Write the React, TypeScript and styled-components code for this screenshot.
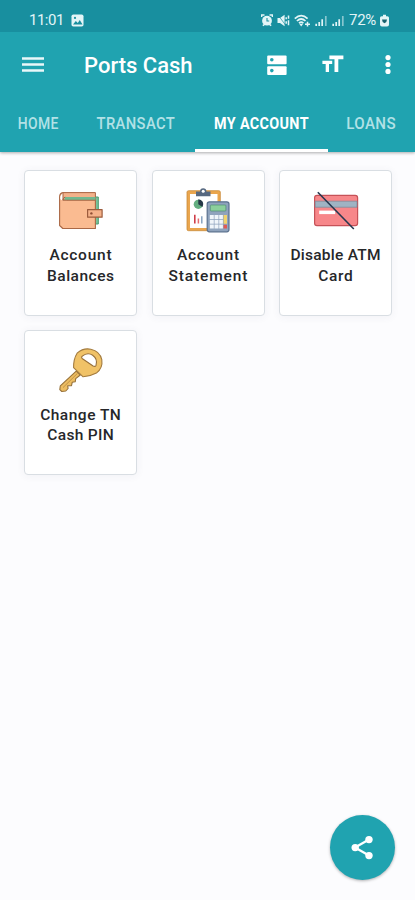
import React from "react";
import styled, { createGlobalStyle } from "styled-components";

const Global = createGlobalStyle`
  * { box-sizing: border-box; }
  body { margin: 0; background: #fcfcfe; font-family: Roboto, "Liberation Sans", sans-serif; }
  svg { display: block; flex: none; }
`;

const Screen = styled.div`
  width: 415px;
  height: 900px;
  display: flex;
  flex-direction: column;
  background: #fcfcfe;
  overflow: hidden;
`;
const Header = styled.header`
  background: #20a3b0;
  height: 152px;
  flex: none;
  box-shadow: 0 1px 3px rgba(0, 0, 0, 0.32);
`;
const StatusBar = styled.div`
  height: 32px;
  padding: 9px 26px 0 29px;
  background: #188f9f;
  display: flex;
  justify-content: space-between;
  color: #e3f5f7;
`;
const StatusGroup = styled.div<{ $gap: number }>`
  display: flex;
  align-items: center;
  height: 23px;
  gap: ${(p) => p.$gap}px;
`;
const StatusText = styled.span<{ $spacing: number }>`
  font-size: 15px;
  line-height: 23px;
  letter-spacing: ${(p) => p.$spacing}px;
`;
const Toolbar = styled.div`
  height: 66px;
  display: flex;
  align-items: center;
  padding: 0 0 0 22px;
  color: #fff;
`;
const Title = styled.h1`
  margin: 2px 0 0 40px;
  flex: 1;
  font-size: 22px;
  font-weight: 500;
  line-height: 30px;
  letter-spacing: 0;
`;
const Actions = styled.div`
  display: flex;
  align-items: center;
`;
const IconButton = styled.button<{ $width: number }>`
  width: ${(p) => p.$width}px;
  height: 30px;
  padding: 0;
  border: 0;
  background: none;
  color: inherit;
  display: flex;
  align-items: center;
  justify-content: center;
`;
const Tabs = styled.nav`
  height: 54px;
  display: grid;
  grid-template-columns: 77px 118px 133px 87px;
`;
const Tab = styled.div<{ $active?: boolean }>`
  display: flex;
  justify-content: center;
  padding-top: 15px;
  color: ${(p) => (p.$active ? "#fff" : "#b2e1e6")};
  border-bottom: 3px solid ${(p) => (p.$active ? "#fff" : "transparent")};
`;
const TabLabel = styled.span<{ $stretch: number; $active?: boolean }>`
  font-size: 16.5px;
  line-height: 22px;
  font-weight: ${(p) => (p.$active ? 700 : 500)};
  white-space: nowrap;
  letter-spacing: 0.4px;
  transform: scaleX(${(p) => p.$stretch});
`;
const Grid = styled.main`
  flex: 1;
  padding: 18px 23px 0 24px;
  display: grid;
  grid-template-columns: repeat(3, 113px);
  grid-auto-rows: 145.5px;
  gap: 14px 14.5px;
  align-content: start;
`;
const Card = styled.section`
  background: #fff;
  border: 1px solid #d9dee3;
  border-radius: 4px;
  box-shadow: 0 1px 8px rgba(60, 70, 110, 0.06);
  display: flex;
  flex-direction: column;
  align-items: center;
  padding-top: 17px;
`;
const CardIcon = styled.div<{ $inset: number }>`
  margin-right: ${(p) => p.$inset}px;
`;
const CardLabel = styled.div`
  margin-top: 13px;
  display: flex;
  flex-direction: column;
  align-items: center;
`;
const LabelLine = styled.span<{ $spacing: number }>`
  font-size: 15.5px;
  font-weight: 500;
  line-height: 20.5px;
  color: #26272a;
  white-space: nowrap;
  letter-spacing: ${(p) => p.$spacing}px;
  margin-right: -${(p) => p.$spacing}px;
`;
const Footer = styled.footer`
  display: flex;
  justify-content: flex-end;
  padding: 0 20.5px 20px 0;
`;
const ShareButton = styled.button`
  width: 65px;
  height: 65px;
  border: 0;
  padding: 0;
  border-radius: 50%;
  background: #20a3b0;
  color: #fff;
  display: flex;
  align-items: center;
  justify-content: center;
  box-shadow: 0 1px 3px rgba(0, 0, 0, 0.3);
`;

const PictureIcon = () => (
  <svg width="13" height="13" viewBox="0 0 13 13">
    <rect x=".5" y=".5" width="12" height="12" rx="1.8" fill="currentColor" />
    <path d="M2 10.5 4.8 7l2 2 2-3 2.7 4.5z" fill="#188f9f" />
    <circle cx="4" cy="3.9" r="1.1" fill="#188f9f" />
  </svg>
);
const AlarmIcon = () => (
  <svg width="12" height="13" viewBox="0 0 12 13">
    <circle cx="6" cy="6.7" r="4.9" fill="currentColor" />
    <path d="M.5 3V1h3M11.5 3V1h-3M2 11.8l1-1.2M10 11.8 9 10.6" fill="none" stroke="currentColor" strokeWidth="1.7" />
    <path d="M6 4v3h2.2" fill="none" stroke="#188f9f" strokeWidth="1.1" />
  </svg>
);
const MuteIcon = () => (
  <svg width="13" height="13" viewBox="0 0 13 13" fill="none" stroke="currentColor">
    <path d="M.5 4H3L7.6.8v11.4L3 9H.5z" fill="currentColor" stroke="none" />
    <path d="M1 1l7.5 10" stroke="#188f9f" strokeWidth=".7" />
    <path d="M9.2 3.2v2M9.2 7.2v2.5M11.5 1.5v3.3M11.5 6.3v5" strokeWidth="1.5" />
  </svg>
);
const WifiIcon = () => (
  <svg width="17" height="14" viewBox="0 0 17 14" fill="none" stroke="currentColor">
    <path d="M.8 4.7Q7.2-1.4 13.6 4.7M2.9 7q4.3-4 8.6 0M5 9.2q2.2-2 4.4 0" strokeWidth="1.7" />
    <path d="M7.2 12.5 5.2 9.8h4z" fill="currentColor" stroke="none" />
    <path d="M11 10.2h5M13.5 7.8v4.8" strokeWidth="1.5" />
  </svg>
);
const SignalIcon = () => (
  <svg width="13" height="13" viewBox="0 0 13 13" stroke="currentColor" strokeWidth="1.7">
    <path d="M1.2 12V9.8M4.2 12V8M7.2 12V5.3" />
    <path d="M10.8 12V2" opacity=".55" />
  </svg>
);
const BatteryIcon = () => (
  <svg width="9" height="13" viewBox="0 0 9 13">
    <path d="M3 .8h3v1.4h1.4Q9 2.2 9 3.8v6.6Q9 12.4 7 12.4H2Q0 12.4 0 10.4V3.8q0-1.6 1.6-1.6H3z" fill="currentColor" />
    <path d="M2 5.4h5L6.3 8 4.5 9.3 2.7 8z" fill="#17636f" />
  </svg>
);
const MenuIcon = () => (
  <svg width="22" height="16" viewBox="0 0 22 16" fill="#e9f8f9">
    <path d="M0 .2h22v2.6H0zM0 6.2h22v2.6H0zM0 12.2h22v2.6H0z" />
  </svg>
);
const StorageIcon = () => (
  <svg width="20" height="21" viewBox="0 0 20 21">
    <rect x=".2" y=".4" width="19.4" height="8.8" rx="1" fill="#fff" />
    <rect x=".2" y="11.2" width="19.4" height="8.8" rx="1" fill="#fff" />
    <circle cx="4.8" cy="4.8" r="1.8" fill="#20a3b0" />
    <circle cx="4.8" cy="15.6" r="1.8" fill="#20a3b0" />
  </svg>
);
const TextSizeIcon = () => (
  <svg width="22" height="20" viewBox="0 0 22 20" fill="#fff">
    <path d="M7.4.6h14v3.7h-5.1V17h-3.8V4.3H7.4zM.4 5.8h9.8v3.3H7V17H3.7V9.1H.4z" />
  </svg>
);
const MoreIcon = () => (
  <svg width="6" height="20" viewBox="0 0 6 20" fill="#fff">
    <circle cx="3" cy="2.6" r="2.6" />
    <circle cx="3" cy="9.5" r="2.6" />
    <circle cx="3" cy="16.4" r="2.6" />
  </svg>
);
const ShareIcon = () => (
  <svg width="23" height="26" viewBox="0 0 23 26" fill="#fff">
    <path d="M18 4.6 4 12.6l14 8" fill="none" stroke="#fff" strokeWidth="2.3" />
    <circle cx="18" cy="4.6" r="3.7" />
    <circle cx="4.2" cy="12.6" r="3.7" />
    <circle cx="18" cy="20.6" r="3.7" />
  </svg>
);

const WalletIcon = () => (
  <svg width="44" height="44" viewBox="0 0 44 44" overflow="visible" strokeLinejoin="round">
    <path d="M6 9h34.3v27H33z" fill="#79c49b" stroke="#4b9a70" />
    <path d="M5 4.6h32.4V12H5z" fill="#f3b28b" stroke="#a86443" />
    <path d="M6.5 9h31v3h-31z" fill="#72b88f" />
    <path d="M5 4.6Q1.6 5.2 1.6 9v28.5l3.2 3h32.6V12.3H4.8Q1.6 11.8 1.6 9" fill="#fabb91" />
    <path d="M5 4.6Q1.6 5.2 1.6 9v28.5l3.2 3h32.6V12.3H4.8" fill="none" stroke="#aa6846" strokeWidth="1.1" />
    <path d="M4.8 12.3Q5 9.7 7.2 9" fill="none" stroke="#a86443" />
    <path d="M29.6 21.6h14.5v7.6H29.6z" fill="#f5b28a" stroke="#9c5c3d" strokeWidth="1.2" />
    <circle cx="33.4" cy="25.4" r="1.2" fill="#8e4e35" />
  </svg>
);
const StatementIcon = () => (
  <svg width="44" height="44" viewBox="0 0 44 44" overflow="visible">
    <rect x="1" y="2.7" width="33.3" height="40" rx="1.5" fill="#eaa64e" stroke="#c98b3b" strokeWidth=".8" />
    <path d="M4 6h27.5v34H4z" fill="#fff" />
    <path d="M10 3.5h4Q14.2.2 17.2.2T20.5 3.5h4v4.8H10z" fill="#566880" />
    <circle cx="17.2" cy="3.3" r="1.5" fill="#fff" />
    <circle cx="12.3" cy="16.3" r="4.6" fill="#63ae80" />
    <path d="M12.3 16.3V11.2a5 5 0 0 1 4.2 7.7z" fill="#243746" />
    <path d="M8.8 35.5v-8.7" stroke="#cf3d48" strokeWidth="1.6" />
    <path d="M12.4 35.5v-5" stroke="#e46b6e" strokeWidth="1.5" />
    <path d="M15.8 35.5V28.2" stroke="#88a3c0" strokeWidth="1.5" />
    <rect x="21.2" y="13.8" width="21.8" height="30" rx="2.2" fill="#8fa3bd" stroke="#5a718e" strokeWidth="1.2" />
    <rect x="24.3" y="17" width="15.6" height="6" rx=".8" fill="#8bcf9b" stroke="#4f8d72" strokeWidth=".7" />
    <path d="M23.8 27h4v4h-4zm4.7 0h4v4h-4zM23.8 31.8h4v4h-4zm4.7 0h4v4h-4zM23.8 36.6h4v4h-4zm4.7 0h4v4h-4zm4.7-9.6h3.7v4h-3.7zm0 4.8h3.7v4h-3.7zm0 4.8h3.7v4h-3.7z" fill="#f0f5fa" />
    <path d="M37.6 27h3.4v8.8h-3.4z" fill="#f1d36d" />
    <path d="M37.6 36.8H41v3.7h-3.4z" fill="#e25a55" />
  </svg>
);
const DisabledCardIcon = () => (
  <svg width="44" height="44" viewBox="0 0 44 44" overflow="visible">
    <rect x=".6" y="7.3" width="43" height="30.4" rx="2.4" fill="#f7878a" stroke="#c65258" strokeWidth="1.2" />
    <path d="M1.2 13.2h41.8v6H1.2z" fill="#9fb3c3" stroke="#75899a" strokeWidth=".7" />
    <path d="M5.2 22.6h16v3.5h-16z" fill="#fff" />
    <path d="M3.8 4.3 39.8 41" stroke="#263850" strokeWidth="1.6" />
  </svg>
);
const KeyIcon = () => (
  <svg width="44" height="44" viewBox="0 0 44 44" overflow="visible" strokeLinejoin="round">
    <path d="M18.2 23.1 2.3 37.8l-.5 3.8 2 1.9 4-.5 2.3-2.5-.4-2.7 3.8-.2.7-3.3 3-.5.5-3.2 4.6-3.6z" fill="#edbd62" stroke="#96713a" strokeWidth="1.1" />
    <path d="M5 39.6 19.5 25.3" stroke="#ba8d43" strokeWidth=".9" />
    <path d="M19.1 5.2Q25.4-.4 32.8 1.2 41.8 3 43.8 11.7 45 20.4 38.4 25.1 32.1 28.5 25.1 28.8L15.6 19.7Q15.4 11 19.1 5.2z" fill="#f0c267" stroke="#a37b3f" strokeWidth="1.1" />
    <path d="M24.3 8.2Q29.4 3.8 34.7 7.2 40 11 38 17.4 37.2 19 35.1 18L24.5 10.8Q22.9 9.5 24.3 8.2z" fill="#fff" stroke="#98713b" strokeWidth="1.1" />
  </svg>
);

const tabs = [
  { label: "HOME", stretch: 0.845 },
  { label: "TRANSACT", stretch: 0.895 },
  { label: "MY ACCOUNT", stretch: 0.87, active: true },
  { label: "LOANS", stretch: 0.915 },
];
const cards = [
  { Icon: WalletIcon, inset: 2, lines: [["Account", 0.75], ["Balances", 0.5]] },
  { Icon: StatementIcon, inset: 0, lines: [["Account", 0.75], ["Statement", 0.85]] },
  { Icon: DisabledCardIcon, inset: 0, lines: [["Disable ATM", 0.25], ["Card", 0.6]] },
  { Icon: KeyIcon, inset: 2, lines: [["Change TN", 0.5], ["Cash PIN", 0.3]] },
] as { Icon: React.FC; inset: number; lines: [string, number][] }[];

export default function App() {
  return (
    <Screen>
      <Global />
      <Header>
        <StatusBar>
          <StatusGroup $gap={7}>
            <StatusText $spacing={-0.5}>11:01</StatusText>
            <PictureIcon />
          </StatusGroup>
          <StatusGroup $gap={4}>
            <AlarmIcon />
            <MuteIcon />
            <WifiIcon />
            <SignalIcon />
            <SignalIcon />
            <StatusText $spacing={-0.3}>72%</StatusText>
            <BatteryIcon />
          </StatusGroup>
        </StatusBar>
        <Toolbar>
          <IconButton $width={22} aria-label="Menu"><MenuIcon /></IconButton>
          <Title>Ports Cash</Title>
          <Actions>
            <IconButton $width={56} aria-label="Accounts"><StorageIcon /></IconButton>
            <IconButton $width={55} aria-label="Text size"><TextSizeIcon /></IconButton>
            <IconButton $width={55} aria-label="More"><MoreIcon /></IconButton>
          </Actions>
        </Toolbar>
        <Tabs>
          {tabs.map((t) => (
            <Tab key={t.label} $active={t.active}>
              <TabLabel $stretch={t.stretch} $active={t.active}>{t.label}</TabLabel>
            </Tab>
          ))}
        </Tabs>
      </Header>
      <Grid>
        {cards.map(({ Icon, inset, lines }) => (
          <Card key={lines[1][0]}>
            <CardIcon $inset={inset}><Icon /></CardIcon>
            <CardLabel>
              {lines.map(([text, spacing]) => (
                <LabelLine key={text} $spacing={spacing}>{text}</LabelLine>
              ))}
            </CardLabel>
          </Card>
        ))}
      </Grid>
      <Footer>
        <ShareButton aria-label="Share"><ShareIcon /></ShareButton>
      </Footer>
    </Screen>
  );
}
